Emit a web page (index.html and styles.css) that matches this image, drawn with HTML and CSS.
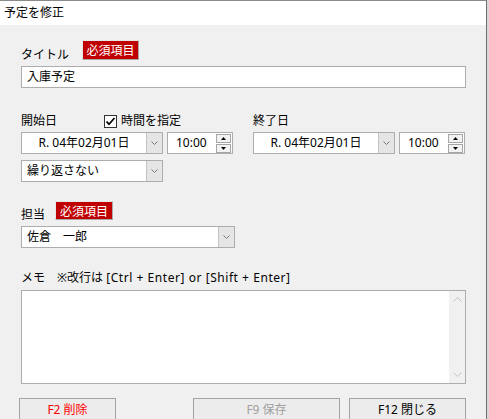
FILE: index.html
```html
<!DOCTYPE html>
<html lang="ja">
<head>
<meta charset="utf-8">
<title>予定を修正</title>
<link rel="stylesheet" href="styles.css">
</head>
<body>
<div class="window">
  <div class="titlebar">予定を修正</div>
  <div class="content">
    <div class="label-row title-row">
      <span class="label title-label">タイトル</span>
      <span class="badge badge-title">必須項目</span>
    </div>
    <div class="textbox">入庫予定</div>

    <div class="dates">
      <div class="col">
        <div class="col-head">
          <span class="label start-label">開始日</span>
          <span class="check"><svg width="11" height="11" viewBox="0 0 11 11"><polyline points="1.5,5.5 4,8.2 9.5,2" fill="none" stroke="#000" stroke-width="1.7"/></svg></span>
          <span class="label">時間を指定</span>
        </div>
        <div class="dt-row">
          <div class="combo date"><span class="combo-text center">R. 04年02月01日</span><span class="drop"><svg width="7" height="4" viewBox="0 0 7 4"><polyline points="0.5,0.5 3.5,3.5 6.5,0.5" fill="none" stroke="#7a7a7a"/></svg></span></div>
          <div class="time"><span>10:00</span><span class="spin"><span class="spin-btn"><svg width="5" height="3" viewBox="0 0 5 3"><polygon points="0,3 2.5,0 5,3" fill="#000"/></svg></span><span class="spin-btn"><svg width="5" height="3" viewBox="0 0 5 3"><polygon points="0,0 5,0 2.5,3" fill="#000"/></svg></span></span></div>
        </div>
        <div class="combo repeat"><span class="combo-text">繰り返さない</span><span class="drop"><svg width="7" height="4" viewBox="0 0 7 4"><polyline points="0.5,0.5 3.5,3.5 6.5,0.5" fill="none" stroke="#7a7a7a"/></svg></span></div>
      </div>
      <div class="col">
        <div class="col-head">
          <span class="label">終了日</span>
        </div>
        <div class="dt-row">
          <div class="combo date"><span class="combo-text center">R. 04年02月01日</span><span class="drop"><svg width="7" height="4" viewBox="0 0 7 4"><polyline points="0.5,0.5 3.5,3.5 6.5,0.5" fill="none" stroke="#7a7a7a"/></svg></span></div>
          <div class="time"><span>10:00</span><span class="spin"><span class="spin-btn"><svg width="5" height="3" viewBox="0 0 5 3"><polygon points="0,3 2.5,0 5,3" fill="#000"/></svg></span><span class="spin-btn"><svg width="5" height="3" viewBox="0 0 5 3"><polygon points="0,0 5,0 2.5,3" fill="#000"/></svg></span></span></div>
        </div>
      </div>
    </div>

    <div class="label-row tanto-row">
      <span class="label tanto-label">担当</span>
      <span class="badge badge-tanto">必須項目</span>
    </div>
    <div class="combo assignee"><span class="combo-text">佐倉　一郎</span><span class="drop"><svg width="7" height="4" viewBox="0 0 7 4"><polyline points="0.5,0.5 3.5,3.5 6.5,0.5" fill="none" stroke="#7a7a7a"/></svg></span></div>

    <div class="label memo-label">メモ　※改行は <span class="keys">[Ctrl + Enter] or [Shift + Enter]</span></div>
    <div class="memo">
      <div class="scrollbar">
        <svg width="9" height="5" viewBox="0 0 9 5"><polyline points="0.5,4.5 4.5,0.5 8.5,4.5" fill="none" stroke="#c2c2c2"/></svg>
        <svg width="9" height="5" viewBox="0 0 9 5"><polyline points="0.5,0.5 4.5,4.5 8.5,0.5" fill="none" stroke="#c2c2c2"/></svg>
      </div>
    </div>

    <div class="buttons">
      <div class="btn btn-delete">F2 削除</div>
      <div class="btn btn-save">F9 保存</div>
      <div class="btn btn-close">F12 閉じる</div>
    </div>
  </div>
</div>
</body>
</html>
```

FILE: styles.css
```css
html, body {
  margin: 0;
  padding: 0;
}
body {
  background: #d8d8d8;
  font-family: "Noto Sans", "Noto Sans CJK JP", sans-serif;
  font-size: 12px;
  color: #000;
  width: 489px;
  height: 419px;
  overflow: hidden;
}
.window {
  width: 487px;
  height: 419px;
  box-sizing: border-box;
  border-top: 1px solid #8a8a8a;
  border-right: 1px solid #6e6e6e;
  background: #f0f0f0;
  overflow: hidden;
}
.titlebar {
  height: 24px;
  line-height: 24px;
  background: #fff;
  padding-left: 4px;
}
.content {
  padding: 15px 0 0 21px;
}
.label {
  line-height: 14px;
  white-space: nowrap;
}
.label-row {
  display: flex;
  align-items: flex-end;
  height: 20px;
}
.label-row .label {
  margin-bottom: -2px;
}
.title-label {
  width: 61px;
}
.badge {
  box-sizing: border-box;
  background: #c00000;
  color: #fff;
  border: 1px solid;
  border-color: #e6e6e6 #a9a9a9 #a9a9a9 #e6e6e6;
  display: flex;
  align-items: center;
  justify-content: center;
}
.badge-title {
  width: 57px;
  height: 20px;
}
.textbox {
  width: 445px;
  height: 22px;
  box-sizing: border-box;
  border: 1px solid #adadad;
  background: #fff;
  padding-left: 5px;
  line-height: 20px;
  margin-top: 6px;
}
.dates {
  display: flex;
  gap: 20px;
  margin-top: 26px;
}
.col {
  width: 212px;
}
.col-head {
  display: flex;
  align-items: center;
  height: 14px;
}
.start-label {
  width: 83px;
}
.check {
  width: 13px;
  height: 13px;
  box-sizing: border-box;
  border: 1px solid #333;
  background: #fff;
  margin-right: 4px;
  display: flex;
  align-items: center;
  justify-content: center;
}
.check svg {
  display: block;
}
.dt-row {
  display: flex;
  gap: 4px;
  margin-top: 4px;
}
.combo {
  display: flex;
  height: 22px;
  box-sizing: border-box;
  border: 1px solid #adadad;
  background: #fff;
}
.combo-text {
  flex: 1;
  line-height: 20px;
  padding-left: 5px;
  white-space: nowrap;
}
.combo-text.center {
  text-align: center;
  padding-left: 0;
}
.drop {
  width: 16px;
  box-sizing: border-box;
  background: #e5e5e5;
  border-left: 1px solid #c4c4c4;
  display: flex;
  align-items: center;
  justify-content: center;
}
.drop svg {
  display: block;
}
.combo.date {
  width: 142px;
}
.combo.repeat {
  width: 142px;
  margin-top: 6px;
}
.time {
  width: 66px;
  height: 22px;
  box-sizing: border-box;
  border: 1px solid #adadad;
  background: #fff;
  display: flex;
  align-items: center;
  justify-content: space-between;
  padding: 0 1px 0 8px;
  line-height: 20px;
}
.spin {
  display: flex;
  flex-direction: column;
  gap: 1px;
}
.spin-btn {
  width: 15px;
  height: 9px;
  box-sizing: border-box;
  border: 1px solid #a6a6a6;
  background: #f2f2f2;
  display: flex;
  align-items: center;
  justify-content: center;
}
.spin-btn svg {
  display: block;
}
.tanto-row {
  margin-top: 19px;
  height: 19px;
}
.tanto-label {
  width: 34px;
}
.badge-tanto {
  width: 58px;
  height: 19px;
}
.combo.assignee {
  width: 214px;
  margin-top: 6px;
}
.memo-label {
  margin-top: 23px;
}
.keys {
  letter-spacing: 0.55px;
}
.memo {
  width: 445px;
  height: 94px;
  box-sizing: border-box;
  border: 1px solid #adadad;
  background: #fff;
  margin-top: 5px;
  display: flex;
  justify-content: flex-end;
}
.scrollbar {
  width: 16px;
  background: #f0f0f0;
  display: flex;
  flex-direction: column;
  align-items: center;
  justify-content: space-between;
  padding: 6px 0 6px;
}
.scrollbar svg {
  display: block;
}
.buttons {
  display: flex;
  margin-top: 14px;
  margin-left: -2px;
}
.btn {
  height: 26px;
  box-sizing: border-box;
  border: 1px solid #a3a3a3;
  background: #ececec;
  text-align: center;
  line-height: 22px;
}
.btn-delete {
  width: 97px;
  color: #ff0000;
}
.btn-save {
  width: 147px;
  margin-left: 77px;
  color: #a0a0a0;
}
.btn-close {
  width: 117px;
  margin-left: 9px;
}
```
